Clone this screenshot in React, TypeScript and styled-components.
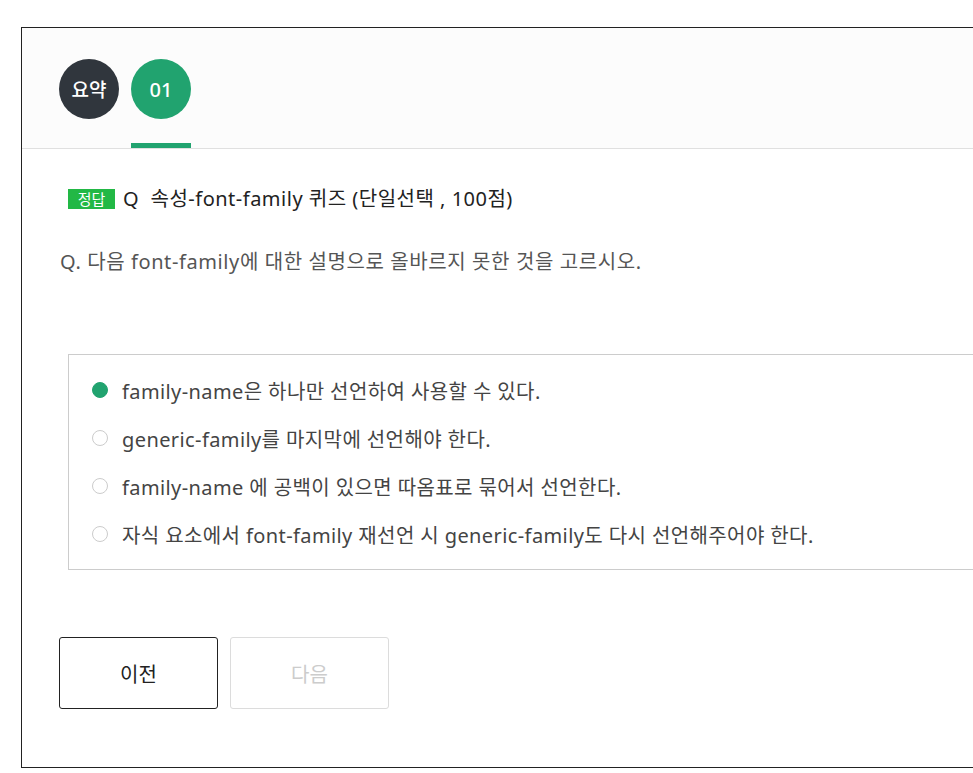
import styled, { createGlobalStyle } from "styled-components";

const GlobalStyle = createGlobalStyle`
  html, body {
    margin: 0;
    padding: 0;
    background: #fff;
    overflow: hidden;
  }
  body {
    font-family: "Noto Sans", "Noto Sans CJK KR", sans-serif;
    color: #222;
  }
`;

const Page = styled.div`
  padding: 27px 0 0 21px;
  width: 1200px;
`;

const Panel = styled.section`
  width: 1100px;
  height: 741px;
  box-sizing: border-box;
  border: 1px solid #222;
  background: #fff;
`;

const TabBar = styled.nav`
  display: flex;
  gap: 12px;
  padding: 31px 0 0 37px;
  background: #fcfcfc;
  border-bottom: 1px solid #e0e0e0;
`;

const Tab = styled.div`
  display: flex;
  flex-direction: column;
  align-items: center;
  width: 60px;
`;

const TabCircle = styled.div<{ $color: string; $size: number }>`
  width: 60px;
  height: 60px;
  border-radius: 50%;
  background: ${(p) => p.$color};
  color: #fff;
  display: flex;
  align-items: center;
  justify-content: center;
  font-size: ${(p) => p.$size}px;
  font-weight: 500;
  margin-bottom: 24px;
`;

const Underline = styled.div<{ $active: boolean }>`
  width: 60px;
  height: 5px;
  background: ${(p) => (p.$active ? "#21a36f" : "transparent")};
`;

const Body = styled.div`
  padding: 37px 0 0 38px;
`;

const Title = styled.h2`
  display: flex;
  align-items: center;
  margin: 0 0 0 8px;
  font-size: 20px;
  letter-spacing: 0.5px;
  font-weight: 400;
  color: #222;
  line-height: 26px;
`;

const Badge = styled.span`
  display: inline-flex;
  align-items: center;
  justify-content: center;
  width: 47px;
  height: 20px;
  background: #22b845;
  color: #fff;
  font-size: 15px;
  letter-spacing: 0;
  margin-right: 8px;
`;

const Question = styled.p`
  margin: 37px 0 0;
  font-size: 20px;
  letter-spacing: 0.6px;
  color: #555;
  line-height: 26px;
`;

const Options = styled.ul`
  list-style: none;
  margin: 79px 0 0 8px;
  padding: 11px 0 11px 23px;
  border: 1px solid #ccc;
  display: flex;
  flex-direction: column;
`;

const Option = styled.li`
  display: flex;
  align-items: center;
  gap: 14px;
  height: 48px;
  font-size: 20px;
  letter-spacing: 0.4px;
  color: #444;
`;

const Radio = styled.span<{ $checked: boolean }>`
  width: 16px;
  height: 16px;
  box-sizing: border-box;
  border-radius: 50%;
  flex-shrink: 0;
  background: ${(p) => (p.$checked ? "#21a36f" : "#fff")};
  border: 1px solid ${(p) => (p.$checked ? "#21a36f" : "#ccc")};
`;

const Buttons = styled.div`
  display: flex;
  gap: 12px;
  margin-top: 67px;
`;

const NavButton = styled.button<{ $disabled?: boolean }>`
  width: 159px;
  height: 72px;
  margin-left: ${(p) => (p.$disabled ? 0 : -1)}px;
  box-sizing: border-box;
  border-radius: 3px;
  background: #fff;
  border: 1px solid ${(p) => (p.$disabled ? "#dcdcdc" : "#222")};
  color: ${(p) => (p.$disabled ? "#ccc" : "#222")};
  font-family: inherit;
  font-size: 20px;
  cursor: ${(p) => (p.$disabled ? "default" : "pointer")};
`;

const choices = [
  "family-name은 하나만 선언하여 사용할 수 있다.",
  "generic-family를 마지막에 선언해야 한다.",
  "family-name 에 공백이 있으면 따옴표로 묶어서 선언한다.",
  "자식 요소에서 font-family 재선언 시 generic-family도 다시 선언해주어야 한다.",
];

export default function App() {
  return (
    <>
      <GlobalStyle />
      <Page>
        <Panel>
          <TabBar>
            <Tab>
              <TabCircle $color="#30363d" $size={19}>
                요약
              </TabCircle>
              <Underline $active={false} />
            </Tab>
            <Tab>
              <TabCircle $color="#21a36f" $size={20}>
                01
              </TabCircle>
              <Underline $active />
            </Tab>
          </TabBar>
          <Body>
            <Title>
              <Badge>정답</Badge>
              Q&nbsp;&nbsp;속성-font-family 퀴즈 (단일선택 , 100점)
            </Title>
            <Question>
              Q. 다음 font-family에 대한 설명으로 올바르지 못한 것을 고르시오.
            </Question>
            <Options>
              {choices.map((c, i) => (
                <Option key={c}>
                  <Radio $checked={i === 0} />
                  {c}
                </Option>
              ))}
            </Options>
            <Buttons>
              <NavButton>이전</NavButton>
              <NavButton $disabled disabled>
                다음
              </NavButton>
            </Buttons>
          </Body>
        </Panel>
      </Page>
    </>
  );
}
